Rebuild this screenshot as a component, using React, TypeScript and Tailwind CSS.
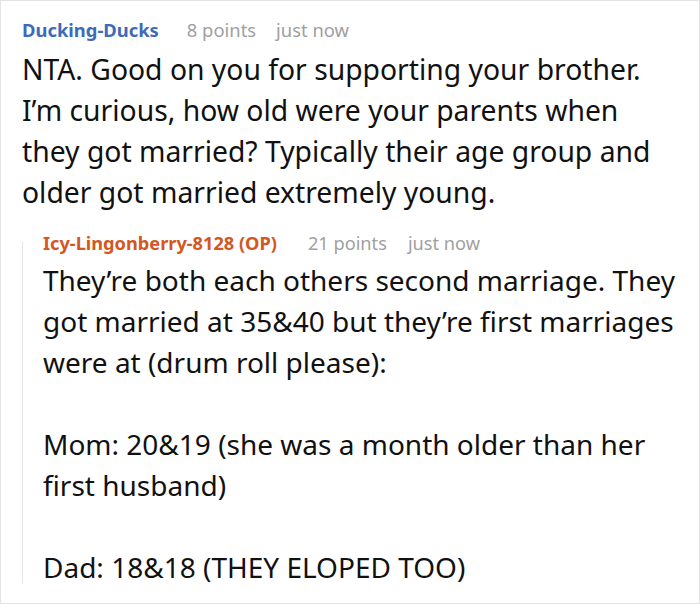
export default function App() {
  return (
    <div className="w-[700px] h-[604px] bg-white" style={{ fontFamily: '"Noto Sans", sans-serif' }}>
      <div className="h-[604px] border border-[#e3e3e3] overflow-hidden pl-[21px] pt-[16px]">
        <div className="flex items-baseline text-[18.4px] leading-[26px]">
          <span className="font-bold text-[#3d6bb8]">Ducking-Ducks</span>
          <span className="ml-[28px] text-[#a0a0a0]">8 points</span>
          <span className="ml-[20px] text-[#a0a0a0]">just now</span>
        </div>
        <p className="mt-[6px] w-[640px] text-[28.3px] leading-[41px] text-[#111]">
          NTA. Good on you for supporting your brother. I’m curious, how old were your parents when they got married? Typically their age group and older got married extremely young.
        </p>
        <div className="mt-[17px] flex">
          <div className="w-[1px] bg-[#e6e6e6] mt-[12px] mb-[5px]" />
          <div className="pl-[20px]">
            <div className="flex items-baseline text-[18.2px] leading-[26px]">
              <span className="font-bold text-[#d3571f]">Icy-Lingonberry-8128 (OP)</span>
              <span className="ml-[31px] text-[#a0a0a0]">21 points</span>
              <span className="ml-[21px] text-[#a0a0a0]">just now</span>
            </div>
            <div className="mt-[4px] w-[645px] text-[28px] leading-[41px] text-[#111]">
              <p>They’re both each others second marriage. They got married at 35&amp;40 but they’re first marriages were at (drum roll please):</p>
              <p className="h-[41px]" />
              <p>Mom: 20&amp;19 (she was a month older than her first husband)</p>
              <p className="h-[41px]" />
              <p>Dad: 18&amp;18 (THEY ELOPED TOO)</p>
            </div>
          </div>
        </div>
      </div>
    </div>
  )
}
